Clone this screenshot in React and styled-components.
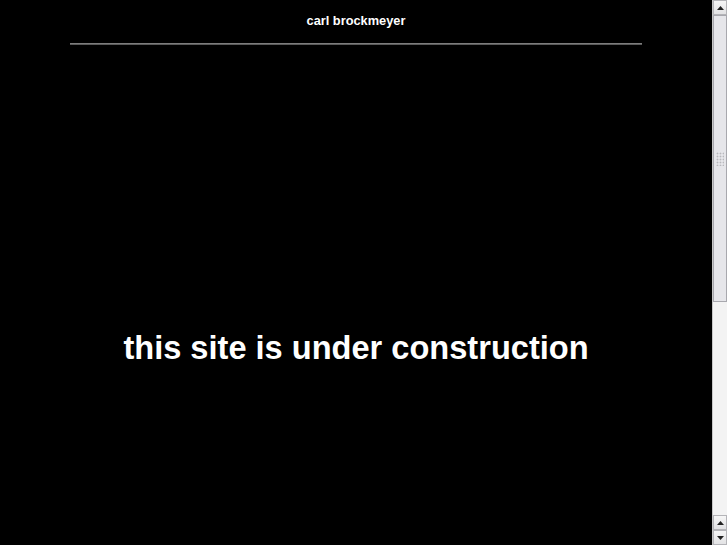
import React from "react";
import styled, { createGlobalStyle } from "styled-components";

const Global = createGlobalStyle`
  html, body { margin: 0; padding: 0; background: #000; overflow: hidden; }
  body { font-family: "Liberation Sans", Arial, sans-serif; }
`;

const Frame = styled.div`
  display: flex;
  width: 727px;
  height: 545px;
  background: #000;
`;

const Page = styled.main`
  flex: 1;
  display: flex;
  flex-direction: column;
  align-items: center;
  color: #fff;
`;

const Title = styled.h1`
  margin: 13px 0 0;
  font-size: 12.8px;
  line-height: 15px;
  font-weight: bold;
`;

const Rule = styled.hr`
  width: 572px;
  height: 0;
  margin: 15px 0 0;
  border: 0;
  border-top: 1px solid #7c7c7c;
  border-bottom: 1px solid #5a5a5a;
`;

const Notice = styled.h2`
  margin: 285px 0 0;
  font-size: 32.6px;
  line-height: 36px;
  font-weight: bold;
`;

const Scrollbar = styled.div`
  width: 15px;
  display: flex;
  flex-direction: column;
  background: #f3f3f3;
  border-left: 1px solid #c8c8c8;
  box-sizing: border-box;
`;

const Arrow = styled.div`
  height: 15px;
  flex: none;
  display: flex;
  align-items: center;
  justify-content: center;
  background: linear-gradient(#f6f6f6, #e2e2e4);
  border: 1px solid #b4b4b8;
  box-sizing: border-box;
  svg { display: block; }
`;

const Track = styled.div`
  flex: 1;
  display: flex;
  flex-direction: column;
`;

const Thumb = styled.div`
  height: 287px;
  display: flex;
  align-items: center;
  justify-content: center;
  background: #e6e6ea;
  border: 1px solid #a8a8ae;
  box-sizing: border-box;
`;

const Grip = styled.div`
  width: 8px;
  height: 14px;
  background-image: radial-gradient(circle, #b8b8bc 0.8px, transparent 1.1px);
  background-size: 3px 3px;
`;

const Up = () => (
  <svg width="7" height="4" viewBox="0 0 7 4"><path d="M0 4 L3.5 0 L7 4 Z" fill="#222" /></svg>
);
const Down = () => (
  <svg width="7" height="4" viewBox="0 0 7 4"><path d="M0 0 L3.5 4 L7 0 Z" fill="#222" /></svg>
);

export default function App() {
  return (
    <Frame>
      <Global />
      <Page>
        <Title>carl brockmeyer</Title>
        <Rule />
        <Notice>this site is under construction</Notice>
      </Page>
      <Scrollbar>
        <Arrow><Up /></Arrow>
        <Track>
          <Thumb><Grip /></Thumb>
        </Track>
        <Arrow><Up /></Arrow>
        <Arrow><Down /></Arrow>
      </Scrollbar>
    </Frame>
  );
}
